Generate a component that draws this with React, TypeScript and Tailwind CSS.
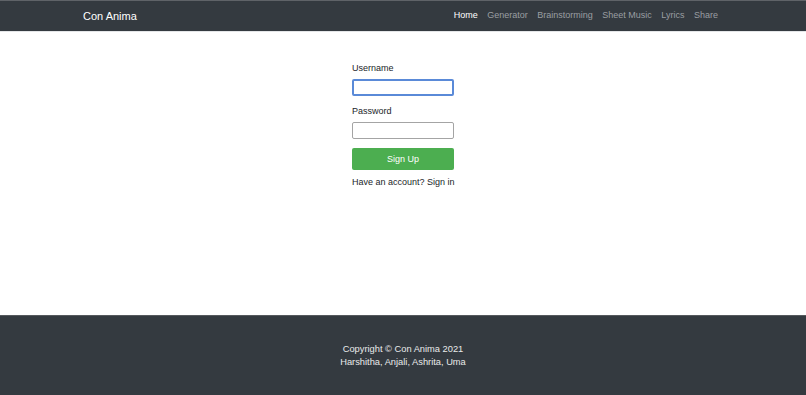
import { useState } from "react";

const links: string[] = ["Home", "Generator", "Brainstorming", "Sheet Music", "Lyrics", "Share"];

function Navbar() {
  return (
    <nav className="h-[32px] bg-[#343a40] border-t border-t-[#5f6368] border-b border-b-[#e4e6e8] flex items-center justify-between pl-[83px] pr-[88px]">
      <span className="text-[11px] text-white">Con Anima</span>
      <ul className="flex items-center gap-[9.5px] text-[9px]">
        {links.map((l, i) => (
          <li key={l} className={i === 0 ? "text-white" : "text-[#9a9ea2]"}>
            {l}
          </li>
        ))}
      </ul>
    </nav>
  );
}

function SignUpForm() {
  const [user, setUser] = useState("");
  const [pass, setPass] = useState("");

  return (
    <form className="mx-auto w-[102px] pt-[30px] flex flex-col text-[9px] leading-[13px] text-[#212529]">
      <label className="mb-[4px]">Username</label>
      <input
        autoFocus
        value={user}
        onChange={(e) => setUser(e.target.value)}
        className="h-[17px] rounded-[2px] border-2 border-[#5a8ad8] outline-none px-[2px] text-[9px]"
      />
      <label className="mt-[9px] mb-[4px]">Password</label>
      <input
        type="password"
        value={pass}
        onChange={(e) => setPass(e.target.value)}
        className="h-[17px] rounded-[2px] border border-[#a4a4a4] outline-none px-[2px] text-[9px]"
      />
      <button
        type="button"
        className="mt-[9px] h-[22px] rounded-[2px] bg-[#4cae50] text-white text-[9px]"
      >
        Sign Up
      </button>
      <p className="mt-[6px] whitespace-nowrap">Have an account? Sign in</p>
    </form>
  );
}

export default function App() {
  return (
    <div className="min-h-[395px] flex flex-col bg-white" style={{ fontFamily: '"Liberation Sans", Arial, sans-serif' }}>
      <Navbar />
      <main className="h-[283px]">
        <SignUpForm />
      </main>
      <footer className="flex-1 h-[80px] bg-[#343a40] border-t border-t-[#55595d] flex flex-col items-center justify-center text-[9.3px] leading-[13px] text-[#e9eaeb]">
        <p>Copyright © Con Anima 2021</p>
        <p>Harshitha, Anjali, Ashrita, Uma</p>
      </footer>
    </div>
  );
}
